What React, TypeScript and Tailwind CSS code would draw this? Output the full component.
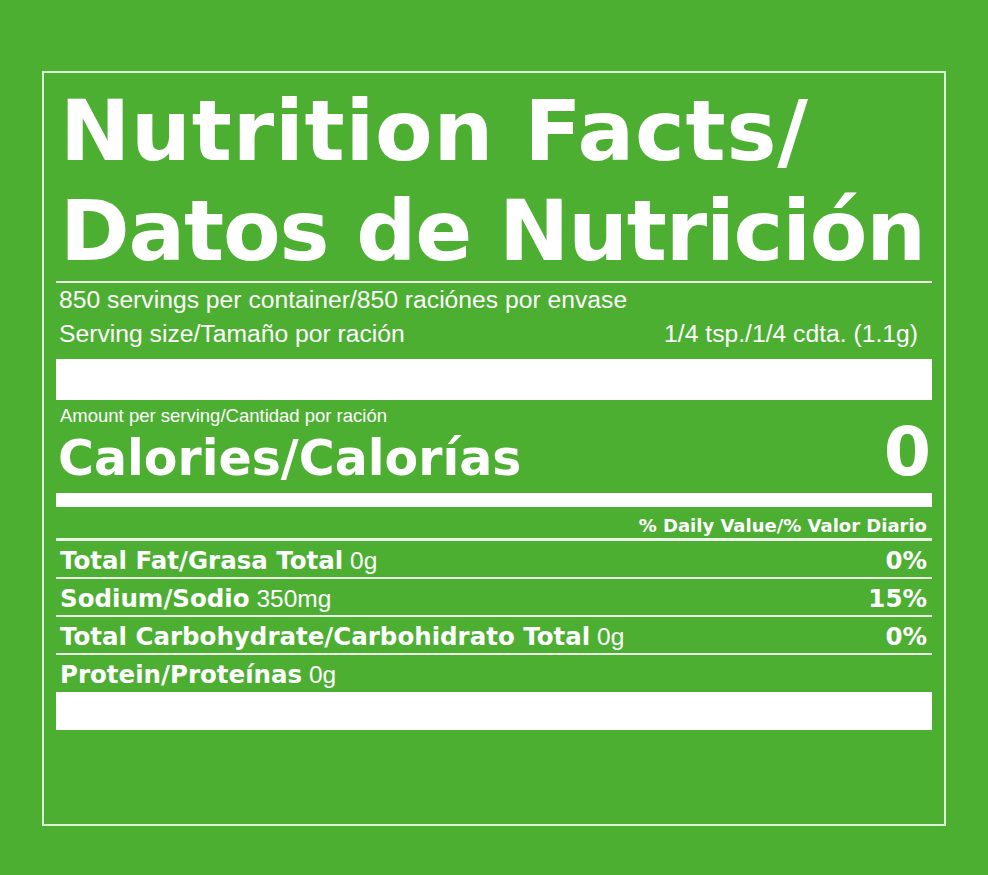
const rows = [
  { label: "Total Fat/Grasa Total", amount: "0g", dv: "0%" },
  { label: "Sodium/Sodio", amount: "350mg", dv: "15%" },
  { label: "Total Carbohydrate/Carbohidrato Total", amount: "0g", dv: "0%" },
  { label: "Protein/Proteínas", amount: "0g", dv: "" },
];

export default function App() {
  return (
    <div className="min-h-[875px] w-full bg-[#4caf32] pt-[71px] pl-[42px] text-white font-['Liberation_Sans',Arial,sans-serif]">
      <div className="w-[904px] h-[755px] border-2 border-[#dcf2d4] px-[12px] pt-[8px]">
        <h1 className="pl-[4px] whitespace-nowrap font-['DejaVu_Sans',sans-serif] font-bold text-[84px] leading-[100px]">
          <span className="block tracking-[0.8px]">Nutrition Facts/</span>
          <span className="block tracking-[-1.2px]">Datos de Nutrición</span>
        </h1>
        <div className="h-[2px] bg-[#eaf8e5]" />

        <div className="pl-[3px] text-[24.7px] leading-[34px]">
          <p>850 servings per container/850 raciónes por envase</p>
          <div className="flex justify-between pr-[14px]">
            <span>Serving size/Tamaño por ración</span>
            <span>1/4 tsp./1/4 cdta. (1.1g)</span>
          </div>
        </div>
        <div className="mt-[8px] h-[41px] bg-white" />

        <p className="mt-[5px] pl-[4px] text-[18.5px] leading-[22px]">
          Amount per serving/Cantidad por ración
        </p>
        <div className="flex items-baseline justify-between pl-[2px] pr-[1px] font-['DejaVu_Sans',sans-serif] font-bold">
          <span className="text-[49px] leading-[48px]">Calories/Calorías</span>
          <span className="text-[68px] leading-[50px]">0</span>
        </div>
        <div className="mt-[10px] h-[14px] bg-white" />

        <p className="mt-[7px] pr-[5px] text-right font-['DejaVu_Sans',sans-serif] font-bold text-[18px] leading-[24px]">
          % Daily Value/% Valor Diario
        </p>
        <div className="h-[3px] bg-[#eaf8e5]" />

        {rows.map((row, i) => (
          <div key={row.label}>
            {i > 0 && <div className="h-[2px] bg-[#eaf8e5]" />}
            <div className="flex h-[36px] justify-between pl-[4px] pr-[5px] text-[24.5px] leading-[40px]">
              <span>
                <span className="font-['DejaVu_Sans',sans-serif] font-bold">{row.label}</span>{" "}
                <span>{row.amount}</span>
              </span>
              <span className="font-['DejaVu_Sans',sans-serif] font-bold">{row.dv}</span>
            </div>
          </div>
        ))}
        <div className="mt-[1px] h-[38px] bg-white" />
      </div>
    </div>
  );
}
